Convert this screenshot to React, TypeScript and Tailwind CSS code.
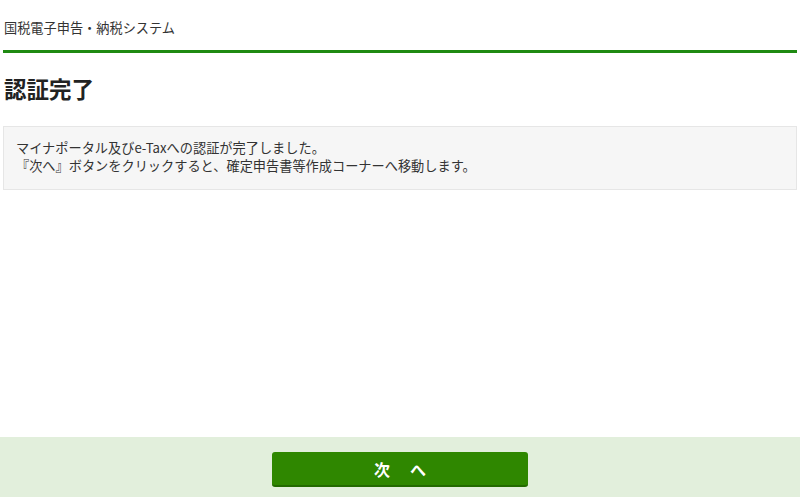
export default function App() {
  return (
    <div
      className="flex h-[497px] w-[800px] flex-col bg-white text-[#333]"
      style={{ fontFamily: '"Noto Sans CJK JP", "Liberation Sans", sans-serif' }}
    >
      <main className="flex-1 px-[3px]">
        {/* site header */}
        <div className="h-[53px] border-b-[3px] border-[#1f8a12] pl-[1px] pt-[18px] text-[13.2px] leading-[20px] text-[#333]">
          国税電子申告・納税システム
        </div>

        <h1 className="mt-[20px] pl-[1px] text-[22.5px] font-bold leading-[30px] text-[#222]">
          認証完了
        </h1>

        <div className="mt-[23px] h-[64px] border border-[#e6e6e6] bg-[#f6f6f6] px-[12px] pt-[12px] text-[13.2px] leading-[18px] text-[#333]">
          <p>マイナポータル及びe-Taxへの認証が完了しました。</p>
          <p>『次へ』ボタンをクリックすると、確定申告書等作成コーナーへ移動します。</p>
        </div>
      </main>

      {/* footer with next button */}
      <footer className="flex h-[60px] items-start justify-center bg-[#e2efdc] pt-[15px]">
        <button className="flex h-[35px] w-[256px] items-center justify-center gap-[20px] rounded-[3px] border-b-2 border-[#236a00] bg-[#2f8700] text-[16px] font-bold text-white">
          <span>次</span>
          <span>へ</span>
        </button>
      </footer>
    </div>
  );
}
